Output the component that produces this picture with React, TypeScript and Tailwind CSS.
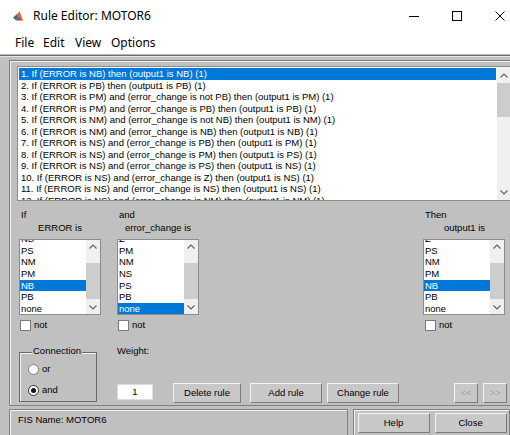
const rules = [
  "1. If (ERROR is NB) then (output1 is NB) (1)",
  "2. If (ERROR is PB) then (output1 is PB) (1)",
  "3. If (ERROR is PM) and (error_change is not PB) then (output1 is PM) (1)",
  "4. If (ERROR is PM) and (error_change is PB) then (output1 is PB) (1)",
  "5. If (ERROR is NM) and (error_change is not NB) then (output1 is NM) (1)",
  "6. If (ERROR is NM) and (error_change is NB) then (output1 is NB) (1)",
  "7. If (ERROR is NS) and (error_change is PB) then (output1 is PM) (1)",
  "8. If (ERROR is NS) and (error_change is PM) then (output1 is PS) (1)",
  "9. If (ERROR is NS) and (error_change is PS) then (output1 is NS) (1)",
  "10. If (ERROR is NS) and (error_change is Z) then (output1 is NS) (1)",
  "11. If (ERROR is NS) and (error_change is NS) then (output1 is NS) (1)",
  "12. If (ERROR is NS) and (error_change is NM) then (output1 is NM) (1)",
];

const inputs = [
  { title: "If", label: "ERROR is", items: ["NS", "PS", "NM", "PM", "NB", "PB", "none"], selected: "NB" },
  { title: "and", label: "error_change is", items: ["Z", "PM", "NM", "NS", "PS", "PB", "none"], selected: "none" },
];
const output = { title: "Then", label: "output1 is", items: ["Z", "PS", "NM", "PM", "NB", "PB", "none"], selected: "NB" };

function Chevron({ up }: { up?: boolean }) {
  return (
    <svg width="8" height="5" viewBox="0 0 8 5" className="block">
      <polyline
        points={up ? "0.5,4.5 4,1 7.5,4.5" : "0.5,0.5 4,4 7.5,0.5"}
        fill="none"
        stroke="#606060"
        strokeWidth="1.1"
      />
    </svg>
  );
}

function SmallList({ items, selected }: { items: string[]; selected: string }) {
  return (
    <div className="flex h-[76px] w-[82px] border border-[#8c8c8c] bg-white">
      <div className="flex-1 overflow-hidden">
        <div className="-mt-[7px]">
          {items.map((item) => (
            <div
              key={item}
              className={`h-[11.7px] pl-[1px] leading-[11.7px] ${
                item === selected ? "bg-[#0078d7] text-white" : "text-black"
              }`}
            >
              {item}
            </div>
          ))}
        </div>
      </div>
      <div className="flex w-[14px] shrink-0 flex-col bg-[#f0f0f0]">
        <div className="flex h-[13px] items-center justify-center">
          <Chevron up />
        </div>
        <div className="flex-1">
          <div className="mt-[10px] h-[36px] bg-[#cdcdcd]" />
        </div>
        <div className="flex h-[14px] items-center justify-center">
          <Chevron />
        </div>
      </div>
    </div>
  );
}

function NotBox({ className }: { className: string }) {
  return (
    <div className={`flex h-[11px] items-center gap-[3px] pl-[1px] ${className}`}>
      <div className="h-[11px] w-[11px] border border-[#7a7a7a] bg-white" />
      <span>not</span>
    </div>
  );
}

function Button({ label, className, disabled }: { label: string; className: string; disabled?: boolean }) {
  return (
    <div
      className={`flex h-[20px] shrink-0 items-center justify-center border border-t-[#f4f4f4] border-l-[#f4f4f4] border-b-[#7c7c7c] border-r-[#7c7c7c] bg-[#c8c8c8] ${
        disabled ? "text-[#a4a4a4]" : "text-black"
      } ${className}`}
    >
      {label}
    </div>
  );
}

function Radio({ label, checked }: { label: string; checked?: boolean }) {
  return (
    <div className="flex h-[11px] items-center gap-[3px]">
      <div
        className={`flex h-[11px] w-[11px] items-center justify-center rounded-full border bg-white ${
          checked ? "border-[#333333]" : "border-[#7a7a7a]"
        }`}
      >
        {checked && <div className="h-[5px] w-[5px] rounded-full bg-[#111111]" />}
      </div>
      <span>{label}</span>
    </div>
  );
}

export default function App() {
  return (
    <div className="h-[435px] w-[510px] overflow-hidden bg-[#c0c0c0] font-['Liberation_Sans',Arial,sans-serif] text-[9.5px] text-black">
      {/* window caption */}
      <div className="flex h-[31px] items-center bg-white pl-[13px] font-['Segoe_UI','Noto_Sans',sans-serif] text-[12px]">
        <svg width="10" height="10" viewBox="0 0 10 10" className="block">
          <polygon points="0,6.5 4,3 6,6 3,9.5" fill="#2f6fb7" />
          <polygon points="4,3 6.6,0.5 10,9.5 6,6" fill="#e4622a" />
          <polygon points="6,6 10,9.5 3,9.5" fill="#b8451c" />
        </svg>
        <span className="ml-[10px]">Rule Editor: MOTOR6</span>
        <div className="ml-auto mr-[5px] flex items-center gap-[33px]">
          <svg width="10" height="10" viewBox="0 0 10 10" className="block">
            <line x1="0" y1="5.5" x2="10" y2="5.5" stroke="#000" strokeWidth="1" />
          </svg>
          <svg width="10" height="10" viewBox="0 0 10 10" className="block">
            <rect x="0.5" y="0.5" width="9" height="9" fill="none" stroke="#000" strokeWidth="1" />
          </svg>
          <svg width="10" height="10" viewBox="0 0 10 10" className="block">
            <path d="M0.5 0.5 L9.5 9.5 M9.5 0.5 L0.5 9.5" stroke="#000" strokeWidth="1" />
          </svg>
        </div>
      </div>

      {/* menu bar */}
      <div className="flex h-[23px] items-center bg-white pl-[15px] font-['Segoe_UI','Noto_Sans',sans-serif] text-[12px]">
        <span className="w-[28px]">File</span>
        <span className="w-[32px]">Edit</span>
        <span className="w-[36px]">View</span>
        <span>Options</span>
      </div>

      <div className="h-[1px] bg-[#b5b5b5]" />
      <div className="h-[1px] bg-[#6e6e6e]" />
      <div className="h-[1px] bg-[#e6e6e6]" />

      {/* main rule frame */}
      <div className="ml-[9px] mt-[3px] h-[346px] w-[520px] border border-[#808080] pl-[7px] pt-[5px] shadow-[inset_1px_1px_0_#f2f2f2]">
        <div className="flex h-[135px] w-[495px] border border-[#8c8c8c] bg-white">
          <div className="flex-1 overflow-hidden p-[1px]">
            {rules.map((rule, i) => (
              <div
                key={rule}
                className={`h-[11.5px] whitespace-nowrap pl-[2px] leading-[11.5px] ${
                  i === 0 ? "bg-[#0078d7] text-white" : "text-black"
                }`}
              >
                {rule}
              </div>
            ))}
          </div>
          <div className="flex w-[14px] shrink-0 flex-col bg-[#f0f0f0]">
            <div className="flex h-[16px] items-center justify-center">
              <Chevron up />
            </div>
            <div className="flex-1">
              <div className="h-[34px] bg-[#cdcdcd]" />
            </div>
            <div className="flex h-[16px] items-center justify-center">
              <Chevron />
            </div>
          </div>
        </div>

        {/* variable pickers */}
        <div className="mt-[7px] flex pl-[2px]">
          {inputs.map((col, i) => (
            <div key={col.label} className={`w-[82px] ${i === 1 ? "ml-[16px]" : ""}`}>
              <div className="h-[14px] pl-[2px] leading-[14px]">{col.title}</div>
              <div className="h-[12px] text-center leading-[12px]">{col.label}</div>
              <div className="mt-[5px]">
                <SmallList items={col.items} selected={col.selected} />
              </div>
              <NotBox className="mt-[5px]" />
            </div>
          ))}
          <div className="ml-[224px] w-[83px]">
            <div className="h-[14px] pl-[2px] leading-[14px]">{output.title}</div>
            <div className="h-[12px] text-center leading-[12px]">{output.label}</div>
            <div className="mt-[5px]">
              <SmallList items={output.items} selected={output.selected} />
            </div>
            <NotBox className="mt-[5px] pl-[2px]" />
          </div>
        </div>

        {/* connection, weight and rule buttons */}
        <div className="mt-[13px] flex items-start pl-[2px]">
          <div className="relative mt-[8px] h-[50px] w-[78px] border border-[#6a6a6a] shadow-[inset_1px_1px_0_#f2f2f2]">
            <span className="absolute -top-[9px] left-[12px] bg-[#c0c0c0] px-[1px] leading-[14px]">
              Connection
            </span>
            <div className="flex flex-col gap-[10px] pl-[8px] pt-[11px]">
              <Radio label="or" />
              <Radio label="and" checked />
            </div>
          </div>
          <div className="ml-[20px]">
            <div className="h-[14px] leading-[14px]">Weight:</div>
            <div className="mt-[25px] flex items-start">
              <div className="mt-[1px] flex h-[16px] w-[36px] items-center justify-center border border-[#dcdcdc] bg-white">
                1
              </div>
              <Button label="Delete rule" className="ml-[20px] w-[68px]" />
              <Button label="Add rule" className="ml-[9px] w-[72px]" />
              <Button label="Change rule" className="ml-[5px] w-[72px]" />
              <Button label="<<" disabled className="ml-[55px] w-[24px]" />
              <Button label=">>" disabled className="ml-[5px] w-[24px]" />
            </div>
          </div>
        </div>
      </div>

      {/* status and window buttons */}
      <div className="mt-[3px] flex">
        <div className="ml-[9px] h-[40px] w-[344px] border border-[#808080] pl-[8px] pt-[3px] leading-[14px] shadow-[inset_1px_1px_0_#f2f2f2]">
          FIS Name: MOTOR6
        </div>
        <div className="ml-[5px] flex h-[40px] w-[160px] items-start border border-[#808080] pl-[4px] pt-[3px] shadow-[inset_1px_1px_0_#f2f2f2]">
          <Button label="Help" className="w-[72px]" />
          <Button label="Close" className="ml-[5px] w-[72px]" />
        </div>
      </div>
    </div>
  );
}
